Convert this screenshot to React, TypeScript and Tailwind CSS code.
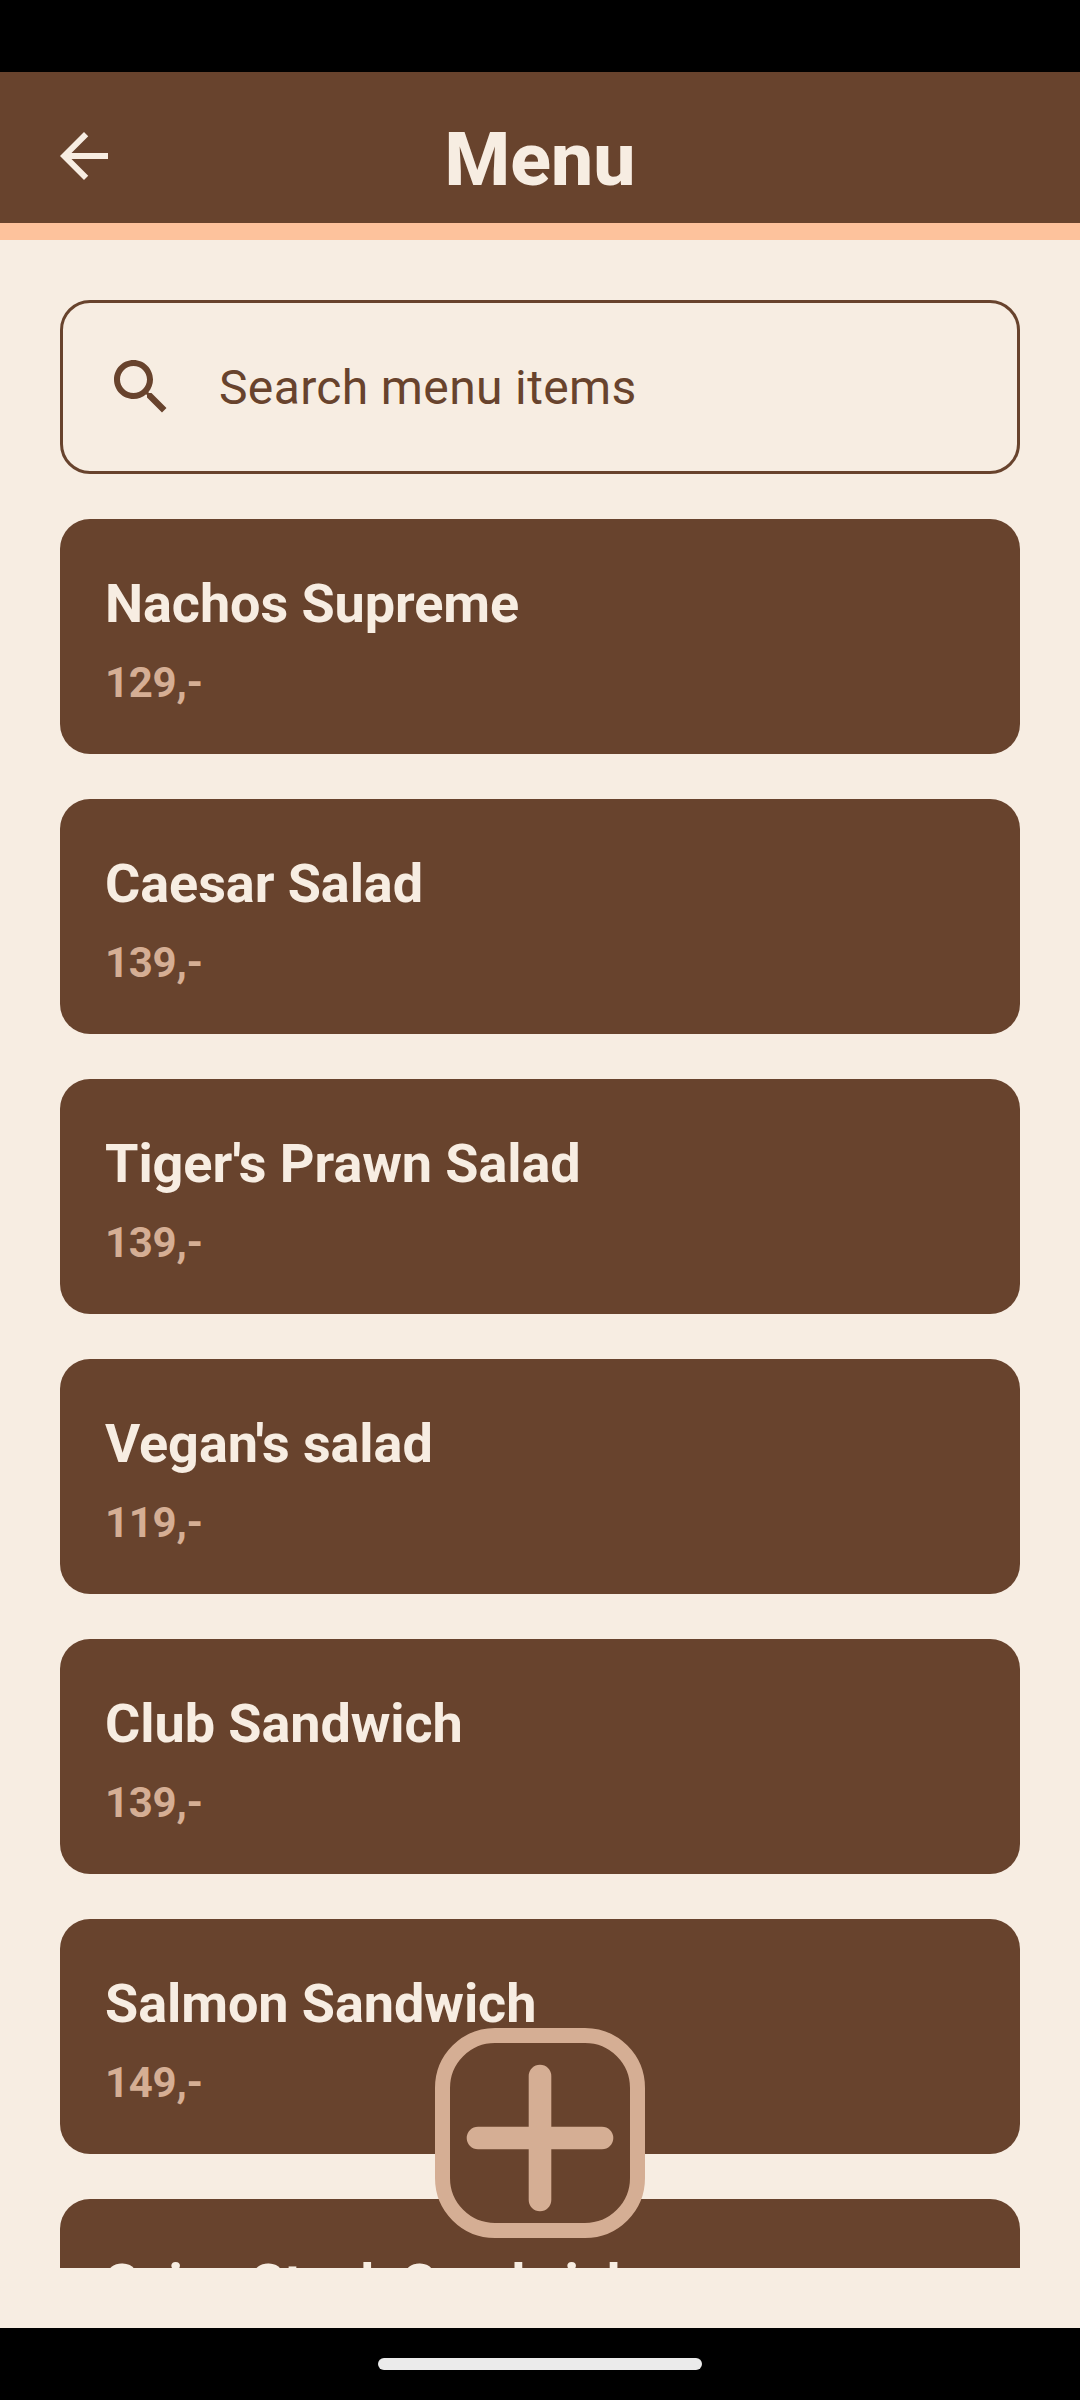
const items = [
  ["Nachos Supreme", "129,-"],
  ["Caesar Salad", "139,-"],
  ["Tiger's Prawn Salad", "139,-"],
  ["Vegan's salad", "119,-"],
  ["Club Sandwich", "139,-"],
  ["Salmon Sandwich", "149,-"],
  ["Spicy Steak Sandwich", "159,-"],
];

export default function App() {
  return (
    <div className="relative flex h-[2400px] w-[1080px] flex-col overflow-hidden bg-[#f7ede2] font-['Roboto',sans-serif]">
      <div className="h-[72px] shrink-0 bg-black" />
      <header className="grid h-[168px] shrink-0 grid-cols-[1fr_auto_1fr] items-center border-b-[17px] border-[#fdc29c] bg-[#68432d] px-[48px]">
        <svg viewBox="0 0 24 24" className="mt-[17px] h-[72px] w-[72px]" fill="#f7ede2">
          <path d="M20 11H7.83l5.59-5.59L12 4l-8 8 8 8 1.41-1.41L7.83 13H20v-2z" />
        </svg>
        <h1 className="mt-[23px] text-[75px] leading-[88px] font-extrabold text-[#f7ede2]">Menu</h1>
      </header>
      <main className="mx-[60px] mt-[60px] flex h-[1968px] shrink-0 flex-col gap-[45px] overflow-hidden">
        <div className="flex h-[174px] shrink-0 items-center rounded-[30px] border-[3px] border-[#68432d] pl-[42px] text-[#68432d]">
          <svg viewBox="0 0 24 24" className="h-[72px] w-[72px]" fill="currentColor">
            <path d="M15.5 14h-.79l-.28-.27C15.41 12.59 16 11.11 16 9.5 16 5.91 13.09 3 9.5 3S3 5.91 3 9.5 5.91 16 9.5 16c1.61 0 3.09-.59 4.23-1.57l.27.28v.79l5 4.99L20.49 19l-4.99-5zm-6 0C7.01 14 5 11.99 5 9.5S7.01 5 9.5 5 14 7.01 14 9.5 11.99 14 9.5 14z" />
          </svg>
          <span className="mt-[2px] ml-[42px] text-[48px] tracking-[0.36px]">Search menu items</span>
        </div>
        {items.map(([name, price]) => (
          <article key={name} className="h-[235px] shrink-0 rounded-[30px] bg-[#68432d] px-[45px] pt-[53px]">
            <h2 className="text-[54px] leading-[64px] font-bold tracking-[-0.08px] text-[#f7ede2]">{name}</h2>
            <p className="mt-[22px] text-[42px] leading-[50px] font-bold tracking-[-0.3px] text-[#d5ae94]">{price}</p>
          </article>
        ))}
      </main>
      <div className="mt-auto flex h-[72px] shrink-0 items-center justify-center bg-black">
        <div className="h-[12px] w-[324px] rounded-full bg-[#ebebeb]" />
      </div>
      <button aria-label="Add" className="absolute top-[2028px] left-[435px] flex h-[210px] w-[210px] items-center justify-center rounded-[60px] border-[15px] border-[#d5ae94] bg-[#68432d]">
        <svg viewBox="0 0 148 148" className="mt-[9px] h-[148px] w-[148px]" stroke="#d5ae94" strokeWidth="22.6" strokeLinecap="round">
          <path d="M74 12V136M12 74H136" />
        </svg>
      </button>
    </div>
  );
}
